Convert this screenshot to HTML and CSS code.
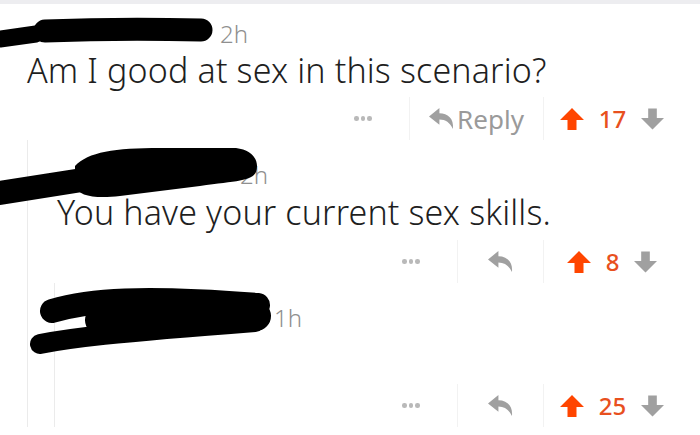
FILE: index.html
```html
<!DOCTYPE html>
<html>
<head>
<meta charset="utf-8">
<link rel="stylesheet" href="styles.css">
</head>
<body>
<div class="page">
  <div class="topbar"></div>
  <article class="comment c1">
    <div class="meta"><span class="author a1"></span><span class="age">2h</span></div>
    <p class="body">Am I good at sex in this scenario?</p>
    <div class="actions">
      <div class="more"><i></i><i></i><i></i></div>
      <div class="sep"></div>
      <div class="reply wide">
        <svg class="ic-reply" viewBox="0 0 24 20"><path d="M0 8 L10 0 V5 C18 5 24 10 23 20 C20 14 16 11 10 11 V16 Z"/></svg>
        <span class="reply-label">Reply</span>
      </div>
      <div class="sep"></div>
      <div class="vote">
        <svg class="ic-up" viewBox="0 0 24 22"><path d="M12 0 L24 12 H16.5 V22 H7.5 V12 H0 Z"/></svg>
        <span class="score">17</span>
        <svg class="ic-down" viewBox="0 0 24 22"><path d="M12 22 L24 10 H16.5 V0 H7.5 V10 H0 Z"/></svg>
      </div>
    </div>
    <div class="children">
      <article class="comment c2">
        <div class="meta"><span class="author a2"></span><span class="age">2h</span></div>
        <p class="body">You have your current sex skills.</p>
        <div class="actions">
          <div class="more"><i></i><i></i><i></i></div>
          <div class="sep"></div>
          <div class="reply narrow">
            <svg class="ic-reply" viewBox="0 0 24 20"><path d="M0 8 L10 0 V5 C18 5 24 10 23 20 C20 14 16 11 10 11 V16 Z"/></svg>
          </div>
          <div class="sep"></div>
          <div class="vote">
            <svg class="ic-up" viewBox="0 0 24 22"><path d="M12 0 L24 12 H16.5 V22 H7.5 V12 H0 Z"/></svg>
            <span class="score">8</span>
            <svg class="ic-down" viewBox="0 0 24 22"><path d="M12 22 L24 10 H16.5 V0 H7.5 V10 H0 Z"/></svg>
          </div>
        </div>
        <div class="children inner">
          <article class="comment c3">
            <div class="meta"><span class="author a3"></span><span class="age">1h</span></div>
            <div class="actions">
              <div class="more"><i></i><i></i><i></i></div>
              <div class="sep"></div>
              <div class="reply narrow">
                <svg class="ic-reply" viewBox="0 0 24 20"><path d="M0 8 L10 0 V5 C18 5 24 10 23 20 C20 14 16 11 10 11 V16 Z"/></svg>
              </div>
              <div class="sep"></div>
              <div class="vote">
                <svg class="ic-up" viewBox="0 0 24 22"><path d="M12 0 L24 12 H16.5 V22 H7.5 V12 H0 Z"/></svg>
                <span class="score">25</span>
                <svg class="ic-down" viewBox="0 0 24 22"><path d="M12 22 L24 10 H16.5 V0 H7.5 V10 H0 Z"/></svg>
              </div>
            </div>
          </article>
        </div>
      </article>
    </div>
  </article>

  <svg class="redact" viewBox="0 0 700 435">
    <g fill="none" stroke="#000" stroke-linecap="round" stroke-linejoin="round">
      <path d="M0 39 L36 34" stroke-width="17"/>
      <path d="M45 31 Q120 28 201 30" stroke-width="23"/>
      <path d="M0 193 L82 180" stroke-width="24"/>
      <path d="M52 311 C90 300 140 296 258 305" stroke-width="24"/>
      <path d="M100 320 L256 316" stroke-width="30"/>
      <path d="M40 344 C70 338 110 333 255 322" stroke-width="20"/>
    </g>
    <path fill="#000" d="M75 166 C88 152 115 148 160 148 L236 148 C252 150 260 160 256 172 C252 181 236 181 200 186 L120 196 C95 199 78 196 75 186 Z"/>
  </svg>
</div>
</body>
</html>
```

FILE: styles.css
```css
* { box-sizing: border-box; }

html, body {
  margin: 0;
  padding: 0;
  background: #ffffff;
}

.page {
  position: relative;
  width: 700px;
  height: 435px;
  overflow: hidden;
  font-family: "Noto Sans", "Open Sans", sans-serif;
  color: #222222;
}

.topbar {
  height: 4px;
  background: #ededf0;
}

.comment {
  display: flex;
  flex-direction: column;
}

.c1 {
  padding-left: 27px;
  padding-right: 20px;
}

.c2 {
  padding-left: 29px;
  padding-top: 21px;
}

.c3 {
  padding-top: 21px;
}

.meta {
  display: flex;
  align-items: baseline;
  height: 28px;
  font-size: 24px;
  line-height: 28px;
  font-weight: 300;
  color: #8f8f8f;
}

.c1 > .meta { margin-top: 16px; }

.author { display: inline-block; }
.a1 { width: 193px; }
.a2 { width: 183px; }
.a3 { width: 219px; }

.body {
  margin: 4px 0 0;
  font-size: 34px;
  line-height: 36px;
  letter-spacing: 0.15px;
  font-weight: 300;
  white-space: nowrap;
  color: #1f1f1f;
}

.c2 > .body { margin-top: 5px; }

.actions {
  display: flex;
  justify-content: flex-end;
  align-items: stretch;
  height: 43px;
  margin-top: 9px;
}

.c2 > .actions { margin-top: 10px; }
.c3 > .actions { margin-top: 52px; }

.more {
  width: 92px;
  display: flex;
  align-items: center;
  justify-content: center;
  gap: 2px;
}

.more i {
  display: block;
  width: 4.5px;
  height: 4.5px;
  border-radius: 50%;
  background: #b9b9b9;
}

.sep {
  width: 1px;
  background: #f2f2f2;
}

.reply {
  display: flex;
  align-items: center;
  justify-content: center;
  gap: 3px;
  color: #9a9a9a;
}

.reply.wide { width: 133px; }
.reply.narrow { width: 85px; }

.ic-reply {
  width: 25px;
  height: 21px;
  fill: #a0a0a0;
}

.reply-label {
  font-size: 26px;
  line-height: 30px;
  color: #9a9a9a;
}

.vote {
  width: 136px;
  display: flex;
  align-items: center;
  justify-content: center;
  gap: 15px;
}

.ic-up {
  width: 24px;
  height: 22px;
  fill: #ff4500;
}

.ic-down {
  width: 23px;
  height: 22px;
  fill: #a0a0a0;
}

.score {
  font-size: 24px;
  line-height: 30px;
  font-weight: 500;
  color: #e8501e;
}

.children {
  border-left: 1px solid #ebebeb;
}

.c1 > .children {
  margin-right: -20px;
  padding-right: 20px;
}

.inner {
  margin-left: -3px;
}

.redact {
  position: absolute;
  left: 0;
  top: 0;
  width: 700px;
  height: 435px;
  pointer-events: none;
}
```
